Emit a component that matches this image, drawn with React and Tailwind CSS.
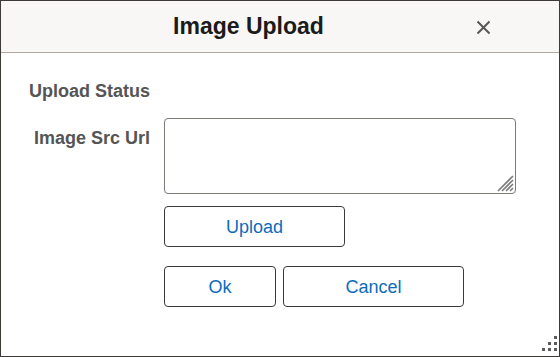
import React from "react";

export default function App() {
  const font = { fontFamily: '"Liberation Sans", Arial, sans-serif' };
  return (
    <div
      className="relative w-[560px] h-[357px] bg-white border border-[#3d3935] flex flex-col overflow-hidden"
      style={font}
    >
      <div className="relative h-[52px] shrink-0 bg-[#f8f7f5] border-b border-[#b0aaa2] flex items-center pr-[63px]">
        <h1 className="flex-1 text-center text-[23px] leading-[23px] font-bold text-[#1b1b1b]">
          Image Upload
        </h1>
        <button className="absolute left-[474px] top-[18px] w-[16px] h-[16px] flex items-center justify-center">
          <svg width="15" height="15" viewBox="0 0 15 15">
            <path d="M1.5 1.5 L13.5 13.5 M13.5 1.5 L1.5 13.5" stroke="#575757" strokeWidth="2" fill="none" />
          </svg>
        </button>
      </div>

      <div className="flex flex-col pt-[29px]">
        <div className="flex">
          <div className="w-[149px] text-right text-[18px] leading-[18px] font-bold text-[#555555]">
            Upload Status
          </div>
        </div>

        <div className="flex mt-[18px]">
          <div className="w-[149px] pt-[11px] text-right text-[18px] leading-[18px] font-bold text-[#555555]">
            Image Src Url
          </div>
          <div className="ml-[14px] flex flex-col">
            <div className="relative w-[352px] h-[76px]">
              <textarea
                className="w-[352px] h-[76px] border border-[#7d7974] rounded-[4px] bg-white outline-none resize-none"
                style={font}
              />
              <svg
                className="absolute right-[2px] bottom-[2px] pointer-events-none"
                width="18"
                height="18"
                viewBox="0 0 18 18"
              >
                <path
                  d="M2 17 L17 2 M6 17 L17 6 M10 17 L17 10 M14 17 L17 14"
                  stroke="#7a7a7a"
                  strokeWidth="1.6"
                  fill="none"
                />
              </svg>
            </div>
            <button className="mt-[12px] w-[181px] h-[41px] pt-[2px] border border-[#3a3a3a] rounded-[4px] bg-white text-[18px] text-[#0b6cbd]">
              Upload
            </button>
            <div className="mt-[19px] flex gap-[7px]">
              <button className="w-[112px] h-[41px] pt-[2px] border border-[#3a3a3a] rounded-[4px] bg-white text-[18px] text-[#0b6cbd]">
                Ok
              </button>
              <button className="w-[181px] h-[41px] pt-[2px] border border-[#3a3a3a] rounded-[4px] bg-white text-[18px] text-[#0b6cbd]">
                Cancel
              </button>
            </div>
          </div>
        </div>
      </div>

      <div className="absolute right-[2px] bottom-[5px] w-[15px] h-[15px]">
        <span className="absolute left-[12px] top-[0px] w-[3px] h-[3px] bg-[#5c5c5c]" />
        <span className="absolute left-[6px] top-[6px] w-[3px] h-[3px] bg-[#5c5c5c]" />
        <span className="absolute left-[12px] top-[6px] w-[3px] h-[3px] bg-[#5c5c5c]" />
        <span className="absolute left-[0px] top-[12px] w-[3px] h-[3px] bg-[#5c5c5c]" />
        <span className="absolute left-[6px] top-[12px] w-[3px] h-[3px] bg-[#5c5c5c]" />
        <span className="absolute left-[12px] top-[12px] w-[3px] h-[3px] bg-[#5c5c5c]" />
      </div>
    </div>
  );
}
